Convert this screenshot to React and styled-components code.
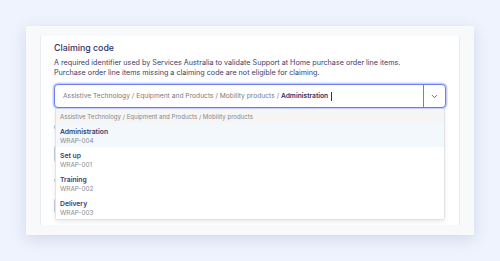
import React from "react";
import styled, { createGlobalStyle } from "styled-components";

const GlobalStyle = createGlobalStyle`
  html, body {
    margin: 0;
    padding: 0;
    background: #eef3fd;
    font-family: Inter, "Noto Sans", sans-serif;
  }
`;

const options = [
  { name: "Administration", code: "WRAP-004", active: true },
  { name: "Set up", code: "WRAP-001" },
  { name: "Training", code: "WRAP-002" },
  { name: "Delivery", code: "WRAP-003" },
];

const Chevron = () => (
  <svg width="9" height="9" viewBox="0 0 24 24" fill="none" stroke="#55577e" strokeWidth="2.4" strokeLinecap="round" strokeLinejoin="round">
    <path d="M6 9l6 6 6-6" />
  </svg>
);

const App = () => {
  return (
    <Page>
      <GlobalStyle />
      <Card>
        <Panel>
          <Title>Claiming code</Title>
          <Description>
            A required identifier used by Services Australia to validate Support at Home purchase order line items.
            <br />
            Purchase order line items missing a claiming code are not eligible for claiming.
          </Description>
          <Field>
            <Combo>
              <InputText>
                Assistive Technology / Equipment and Products / Mobility products / <strong>Administration</strong>
                <Caret />
              </InputText>
              <Toggle>
                <Chevron />
              </Toggle>
            </Combo>
            <Menu>
              <GroupHeader>Assistive Technology / Equipment and Products / Mobility products</GroupHeader>
              {options.map((o) => (
                <Option key={o.code} $active={o.active}>
                  <OptionName>{o.name}</OptionName>
                  <OptionCode>{o.code}</OptionCode>
                </Option>
              ))}
            </Menu>
          </Field>
          <Hidden>
            <HiddenMark $h={4} />
            <HiddenBox $h={16} />
            <HiddenMark $h={3} />
            <HiddenBox $h={14} />
          </Hidden>
        </Panel>
      </Card>
    </Page>
  );
};

const Page = styled.div`
  width: 500px;
  height: 261px;
  padding: 26px;
  box-sizing: border-box;
  background: #eef3fd;
`;

const Card = styled.div`
  height: 209px;
  box-sizing: border-box;
  background: #f8f9fb;
  padding: 10px 14px 10px;
  box-shadow: 0 4px 14px rgba(80, 95, 150, 0.18);
`;

const Panel = styled.div`
  height: 100%;
  box-sizing: border-box;
  background: #ffffff;
  border-left: 1px solid #ececf0;
  border-right: 1px solid #ececf0;
  padding: 6px 13px 0;
  overflow: hidden;
`;

const Title = styled.div`
  font-size: 8.8px;
  font-weight: 500;
  color: #2f2f63;
  line-height: 12px;
`;

const Description = styled.div`
  margin-top: 4px;
  font-size: 7.2px;
  line-height: 10px;
  color: #3a3c6a;
`;

const Field = styled.div`
  position: relative;
  margin-top: 6px;
`;

const Combo = styled.div`
  display: flex;
  height: 24px;
  box-sizing: border-box;
  border: 1px solid #6c7cf2;
  border-radius: 4px;
  box-shadow: 0 0 0 1.5px #c9d1fb;
  background: #fff;
`;

const InputText = styled.div`
  flex: 1;
  display: flex;
  align-items: center;
  padding-left: 8px;
  font-size: 6.7px;
  color: #7a7a80;
  white-space: pre;

  strong {
    font-weight: 600;
    color: #2f2f63;
  }
`;

const Caret = styled.span`
  display: inline-block;
  width: 1px;
  height: 9px;
  margin-left: 3px;
  background: #2f2f63;
`;

const Toggle = styled.div`
  width: 21px;
  display: flex;
  align-items: center;
  justify-content: center;
  border-left: 1px solid #6c7cf2;
`;

const Menu = styled.div`
  position: absolute;
  top: 25px;
  left: 1px;
  right: 1px;
  background: #fff;
  border: 1px solid #e2e2e6;
  border-top: none;
  border-radius: 0 0 3px 3px;
  box-shadow: 0 2px 4px rgba(0, 0, 0, 0.08);
  z-index: 2;
`;

const GroupHeader = styled.div`
  height: 14px;
  display: flex;
  align-items: center;
  padding-left: 4px;
  background: #f5f5f6;
  font-size: 6.1px;
  color: #86868c;
`;

const Option = styled.div`
  height: 24px;
  box-sizing: border-box;
  padding: 4px 4px 0;
  background: ${(p) => (p.$active ? "#f3f8fc" : "#fff")};
`;

const OptionName = styled.div`
  font-size: 6.8px;
  font-weight: 600;
  color: #3b3b72;
  line-height: 9px;
`;

const OptionCode = styled.div`
  font-size: 6.4px;
  color: #8a8a90;
  line-height: 10px;
`;

const Hidden = styled.div`
  margin-top: 17px;
  display: flex;
  flex-direction: column;
  align-items: flex-start;
  gap: 16px;
`;

const HiddenMark = styled.div`
  width: 6px;
  height: ${(p) => p.$h}px;
  background: #c4c6d4;
  border-radius: 1px;
`;

const HiddenBox = styled.div`
  width: 120px;
  height: ${(p) => p.$h}px;
  border: 1px solid #c9cbe0;
  border-radius: 3px;
`;

export default App;
